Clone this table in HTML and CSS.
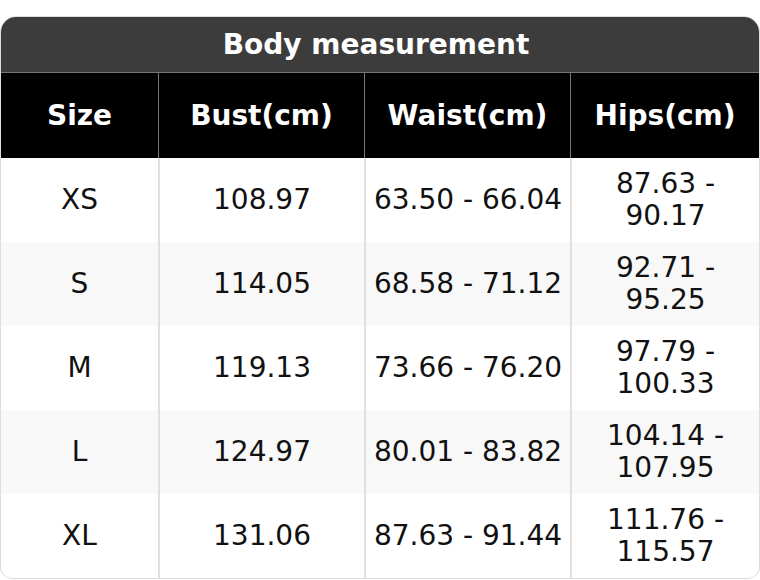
FILE: index.html
```html
<!DOCTYPE html>
<html>
<head>
<meta charset="utf-8">
<link rel="stylesheet" href="styles.css">
</head>
<body>
<div class="wrap">
  <table class="chart">
    <colgroup>
      <col class="c1"><col class="c2"><col class="c3"><col class="c4">
    </colgroup>
    <thead>
      <tr><th colspan="4" class="title">Body measurement</th></tr>
      <tr class="head">
        <th>Size</th><th>Bust(cm)</th><th>Waist(cm)</th><th>Hips(cm)</th>
      </tr>
    </thead>
    <tbody>
      <tr><td>XS</td><td>108.97</td><td>63.50 - 66.04</td><td>87.63 -<br>90.17</td></tr>
      <tr><td>S</td><td>114.05</td><td>68.58 - 71.12</td><td>92.71 -<br>95.25</td></tr>
      <tr><td>M</td><td>119.13</td><td>73.66 - 76.20</td><td>97.79 -<br>100.33</td></tr>
      <tr><td>L</td><td>124.97</td><td>80.01 - 83.82</td><td>104.14 -<br>107.95</td></tr>
      <tr><td>XL</td><td>131.06</td><td>87.63 - 91.44</td><td>111.76 -<br>115.57</td></tr>
    </tbody>
  </table>
</div>
</body>
</html>
```

FILE: styles.css
```css
html, body {
  margin: 0;
  padding: 0;
  background: #ffffff;
}
.wrap {
  padding-top: 16px;
  width: 760px;
}
.chart {
  width: 760px;
  table-layout: fixed;
  border-collapse: separate;
  border-spacing: 0;
  font-family: "DejaVu Sans", sans-serif;
  font-size: 28px;
  color: #111;
  border: 1px solid #dddddd;
  border-radius: 16px 16px 12px 12px;
  overflow: hidden;
}
.c1 { width: 157px; }
.c2 { width: 206px; }
.c3 { width: 206px; }
.c4 { width: 189px; }
.title {
  background: #3c3c3c;
  color: #ffffff;
  font-weight: bold;
  font-size: 28px;
  height: 55px;
  padding: 0 8px 0 0;
  text-align: center;
  border-bottom: 1px solid #777777;
}
.head th {
  background: #000000;
  color: #ffffff;
  font-weight: bold;
  height: 85px;
  padding: 0;
  text-align: center;
  border-left: 1px solid #777777;
}
.head th:first-child { border-left: none; }
td {
  text-align: center;
  padding: 10px 0;
  height: 64px;
  line-height: 32px;
  border-left: 2px solid #e0e0e0;
}
td:first-child { border-left: none; }
tbody tr:nth-child(even) td { background: #f8f8f8; }
```
